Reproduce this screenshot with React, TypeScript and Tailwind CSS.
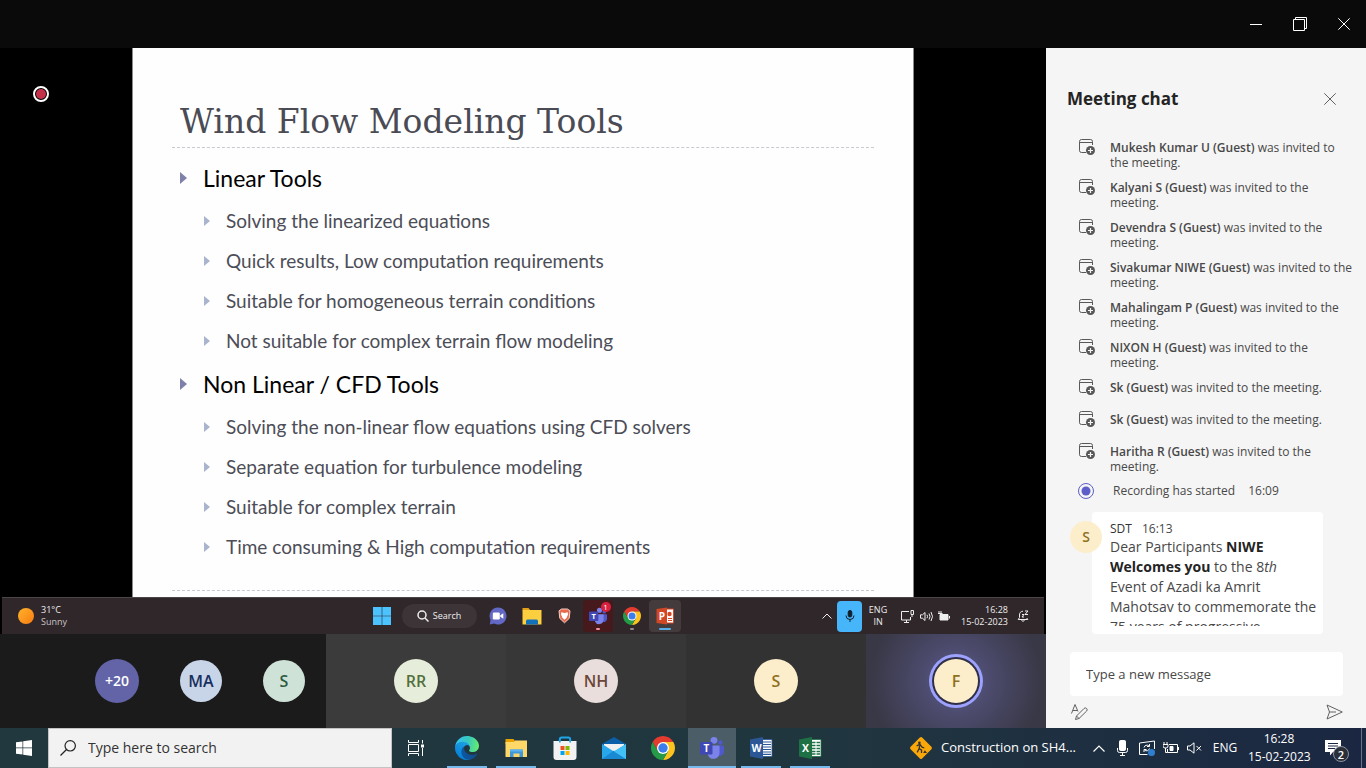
import type { ReactNode } from 'react'
import { clsx } from 'clsx'

const invites = [
  'Mukesh Kumar U (Guest)',
  'Kalyani S (Guest)',
  'Devendra S (Guest)',
  'Sivakumar NIWE (Guest)',
  'Mahalingam P (Guest)',
  'NIXON H (Guest)',
  'Sk (Guest)',
  'Sk (Guest)',
  'Haritha R (Guest)',
]

const slide = [
  {
    heading: 'Linear Tools',
    points: [
      'Solving the linearized equations',
      'Quick results, Low computation requirements',
      'Suitable for homogeneous terrain conditions',
      'Not suitable for complex terrain flow modeling',
    ],
  },
  {
    heading: 'Non Linear / CFD Tools',
    points: [
      'Solving the non-linear flow equations using CFD solvers',
      'Separate equation for turbulence modeling',
      'Suitable for complex terrain',
      'Time consuming & High computation requirements',
    ],
  },
]

/* ---------- Icons ---------- */

function CloseIcon() {
  return (
    <svg className="size-3" viewBox="0 0 12 12" fill="none" stroke="currentColor" strokeWidth="1">
      <path d="M.3.3l11.4 11.4M11.7.3L.3 11.7" />
    </svg>
  )
}

function InviteIcon() {
  return (
    <svg className="size-4 shrink-0 text-[#585858]" viewBox="0 0 16 16" fill="none">
      <path d="M7 13.5H2.5a2 2 0 01-2-2v-9a2 2 0 012-2h9a2 2 0 012 2V6M.5 3.5h13" stroke="currentColor" />
      <circle cx="11.5" cy="11.5" r="4.5" fill="currentColor" />
      <path d="M11.5 9v5M9 11.5h5" stroke="#f5f5f5" strokeWidth="1.2" />
    </svg>
  )
}

function ChromeIcon({ className }: { className: string }) {
  return (
    <svg className={className} viewBox="0 0 24 24">
      <path d="M22.39 6H12L6.8 15 1.61 6A12 12 0 0122.39 6z" fill="#e33b2e" />
      <path d="M22.39 6H12l5.2 9L12 24A12 12 0 0022.39 6z" fill="#fcc31e" />
      <path d="M12 24l5.2-9H6.8L1.61 6A12 12 0 0012 24z" fill="#259b48" />
      <circle cx="12" cy="12" r="6" fill="#fff" />
      <circle cx="12" cy="12" r="4.7" fill="#3b7ded" />
    </svg>
  )
}

function EdgeIcon() {
  return (
    <svg className="size-6" viewBox="0 0 256 256">
      <defs>
        <linearGradient id="edgeA" x1="60" y1="180" x2="240" y2="180" gradientUnits="userSpaceOnUse">
          <stop stopColor="#0c59a4" />
          <stop offset="1" stopColor="#114a8b" />
        </linearGradient>
        <linearGradient id="edgeB" x1="130" y1="90" x2="50" y2="220" gradientUnits="userSpaceOnUse">
          <stop stopColor="#1b9de2" />
          <stop offset="1" stopColor="#0883d9" />
        </linearGradient>
        <linearGradient id="edgeC" x1="10" y1="60" x2="250" y2="110" gradientUnits="userSpaceOnUse">
          <stop stopColor="#35c1f1" />
          <stop offset=".5" stopColor="#36c8c0" />
          <stop offset="1" stopColor="#66eb6e" />
        </linearGradient>
      </defs>
      <path
        fill="url(#edgeA)"
        d="M231 190.5c-3.4 1.8-6.9 3.3-10.5 4.7a101.9 101.9 0 01-35.9 6.46c-47.3 0-88.5-32.54-88.5-74.3a31.48 31.48 0 0116.4-27.3c-42.8 1.8-53.8 46.4-53.8 72.5 0 73.88 68.1 81.37 82.8 81.37 7.9 0 19.8-2.3 27-4.56l1.3-.44a128.34 128.34 0 0066.6-52.8 4 4 0 00-5.4-5.6z"
      />
      <path
        fill="url(#edgeB)"
        d="M105.73 241.42a79.2 79.2 0 01-22.74-21.34 80.72 80.72 0 0129.53-120c3.12-1.47 8.45-4.13 15.54-4a32.35 32.35 0 0125.69 13 31.88 31.88 0 016.36 18.66c0-.21 24.46-79.6-80-79.6-43.9 0-80 41.66-80 78.21a130.15 130.15 0 0012.11 56 128 128 0 00156.38 67.11 75.55 75.55 0 01-62.78-8z"
      />
      <path
        fill="url(#edgeC)"
        d="M152.33 148.86c-.81 1.05-3.3 2.5-3.3 5.66 0 2.61 1.7 5.12 4.72 7.23 14.38 10 41.49 8.68 41.56 8.68a59.56 59.56 0 0030.27-8.35A61.38 61.38 0 00256 109.24c.26-22.41-8-37.31-11.34-43.91C223.46 23.84 177.72 0 128 0A128 128 0 000 126.2c.48-36.54 36.8-66.05 80-66.05 3.5 0 23.46.34 42 10.07 16.34 8.58 24.9 18.94 30.85 29.21 6.18 10.67 7.28 24.15 7.28 29.52s-2.76 13.32-7.8 19.91z"
      />
    </svg>
  )
}

function ExplorerIcon() {
  return (
    <svg className="size-6" viewBox="0 0 24 24">
      <path d="M1.500 3h8l1.500 2v3h-9.500z" fill="#e8a200" />
      <path d="M1.500 6h8.500l1-1.500h12v16.500h-21.500z" fill="#ffd868" />
      <path d="M6 21v-7.500h13v7.500h-3.500v-3.500h-6V21z" fill="#3f97dc" />
      <path d="M6 13.500h13v2H6z" fill="#5db4ee" />
    </svg>
  )
}

function StoreIcon() {
  return (
    <svg className="size-6" viewBox="0 0 24 24">
      <path d="M6.800 6V3.500a2 2 0 012-2h6.400a2 2 0 012 2V6" fill="none" stroke="#1fa5e8" strokeWidth="2" />
      <path d="M.5 5h23v16a3 3 0 01-3 3h-17a3 3 0 01-3-3z" fill="#f2f2f2" />
      <path d="M7.500 10h4v4h-4z" fill="#f25022" />
      <path d="M12.500 10h4v4h-4z" fill="#7fba00" />
      <path d="M7.500 15h4v4h-4z" fill="#00a4ef" />
      <path d="M12.500 15h4v4h-4z" fill="#ffb900" />
      <path d="M6 5h1.700v1.500H6zM16.300 5H18v1.500h-1.700z" fill="#1fa5e8" />
    </svg>
  )
}

function MailIcon() {
  return (
    <svg className="size-6" viewBox="0 0 24 24">
      <path d="M0 8l12-7 12 7v3H0z" fill="#0a5fa8" />
      <path d="M2 8h20v7H2z" fill="#f1f1f1" />
      <path d="M0 8l12 7.500L24 8v15H0z" fill="#28a8ea" />
      <path d="M0 23l12-8.500 12 8.500z" fill="#1989d4" />
      <path d="M24 8v15L12 15.500z" fill="#42c1f7" />
    </svg>
  )
}

function TeamsIcon({ className }: { className: string }) {
  return (
    <svg className={className} viewBox="0 0 24 24">
      <circle cx="20.300" cy="6.500" r="2.300" fill="#5059c9" />
      <circle cx="14" cy="4.300" r="3.400" fill="#7b83eb" />
      <path d="M17 9.500h6a1 1 0 011 1V16a4 4 0 01-6.500 3z" fill="#5059c9" />
      <path d="M8 9.500h10.500a1 1 0 011 1V17a6 6 0 01-11.500 2.200z" fill="#7b83eb" />
      <rect x="0" y="6" width="12.500" height="12.500" rx="1.200" fill="#4048b5" />
      <text x="6.300" y="15.800" textAnchor="middle" fontSize="10" fontWeight="700" fill="#fff">T</text>
    </svg>
  )
}

function OfficeIcon({ letter, color, sheet }: { letter: string; color: string; sheet?: boolean }) {
  return (
    <svg className="size-6" viewBox="0 0 24 24">
      <path d="M12 3.500h11v17H12z" fill="#fff" stroke={color} strokeWidth=".8" />
      {sheet ? (
        <path
          d="M14 6.500h3.500M18.500 6.500H22M14 9.500h3.500M18.500 9.500H22M14 12.500h3.500M18.500 12.500H22M14 15.500h3.500M18.500 15.500H22M14 18h3.500M18.500 18H22"
          stroke={color}
          strokeWidth="1.600"
        />
      ) : (
        <path d="M14 6h8M14 8.500h8M14 11h8M14 13.500h8M14 16h8M14 18.300h8" stroke={color} strokeWidth="1.200" />
      )}
      <path d="M1 3.500l13-2.500v22L1 20.500z" fill={color} />
      <text x="7.500" y="16" textAnchor="middle" fontSize="10.500" fontWeight="700" fill="#fff">{letter}</text>
    </svg>
  )
}

/* ---------- Shared screen ---------- */

function Slide() {
  return (
    <article className="mx-auto w-full max-w-[782px] flex-1 border-x border-[#8a8a8a] bg-[#fefefe] px-[39px] pt-12">
      <h1 className="border-b border-dashed border-[#c9c9d0] pl-2 font-['DejaVu_Serif',serif] text-[33px] leading-[51px] whitespace-nowrap text-[#4a4b55]">
        Wind Flow Modeling Tools
      </h1>
      <ul className="border-b border-dashed border-[#c9c9d0] pt-[7px] pb-[23px] pl-2 font-['Lato',sans-serif]">
        {slide.map((group) => (
          <li key={group.heading}>
            <div className="flex items-center gap-4 text-[23px] leading-[46px] text-black">
              <Arrow className="h-3 w-[7px] text-[#7f82a8]" />
              {group.heading}
            </div>
            <ul className="pl-6">
              {group.points.map((point) => (
                <li key={point} className="flex items-center gap-4 text-[19px] leading-10 whitespace-nowrap text-[#4c4d57]">
                  <Arrow className="h-[10px] w-[6px] text-[#a9b5cd]" />
                  {point}
                </li>
              ))}
            </ul>
          </li>
        ))}
      </ul>
    </article>
  )
}

function Arrow({ className }: { className: string }) {
  return (
    <svg className={clsx('shrink-0', className)} viewBox="0 0 7 12" preserveAspectRatio="none">
      <path d="M0 0l7 6-7 6z" fill="currentColor" />
    </svg>
  )
}

function SharedTaskbar() {
  return (
    <div className="mx-[2px] flex h-[37px] shrink-0 items-center justify-between border-t border-[#4c4546] bg-[#30272a] font-['Open_Sans',sans-serif] text-[9px] leading-3 text-[#eee]">
      <div className="flex flex-1 items-center gap-[7px]">
        <span className="ml-4 size-4 rounded-full bg-linear-to-br from-[#ffb32b] to-[#f77b10]" />
        <p>
          31°C
          <br />
          <span className="text-[#c9c4c5]">Sunny</span>
        </p>
      </div>

      <div className="flex items-center">
        <button aria-label="Windows" className="flex w-8 justify-center">
          <svg className="size-[18px]" viewBox="0 0 18 18" fill="#4cc2ff">
            <path d="M0 0h8.700v8.700H0zM9.300 0H18v8.700H9.300zM0 9.300h8.700V18H0zM9.300 9.300H18V18H9.300z" />
          </svg>
        </button>
        <button className="mx-1 flex h-6 w-[75px] items-center justify-center gap-1 rounded-full bg-[#3c3436]">
          <svg className="size-3" viewBox="0 0 12 12" fill="none" stroke="currentColor" strokeWidth="1.500">
            <circle cx="5" cy="5" r="4" />
            <path d="M8 8l3.500 3.500" />
          </svg>
          Search
        </button>
        <button aria-label="Chat" className="flex w-[34px] justify-center">
          <svg className="size-[18px]" viewBox="0 0 18 18">
            <path d="M9 .5a8.500 8.500 0 11-3.800 16.100L.8 17.500l.7-4.600A8.500 8.500 0 019 .5z" fill="#6268c4" />
            <rect x="3.800" y="5.500" width="7" height="7" rx="1.200" fill="#fff" />
            <path d="M11.300 8.300l3-2v5.500l-3-2z" fill="#fff" />
          </svg>
        </button>
        <button aria-label="Files" className="flex w-[34px] justify-center">
          <svg className="h-[17px] w-5" viewBox="0 0 20 17">
            <path d="M.5 0h6l2 2.500H.5z" fill="#e5a01a" />
            <path d="M.5 2h19v14.500H.5z" fill="#fccf3e" />
            <path d="M4 16.500v-3.500a1.500 1.500 0 011.500-1.500h9a1.500 1.500 0 011.500 1.500v3.500z" fill="#1371b9" />
          </svg>
        </button>
        <button aria-label="Brave" className="flex w-8 justify-center">
          <svg className="h-4 w-[13px]" viewBox="0 0 13 16">
            <path d="M3.500 1h6l2.500 1.800-.8 7.600-4.700 4.400-4.700-4.400L1 2.800z" fill="#e76a4f" stroke="#f6cfc5" />
            <path d="M3.300 4.200l3.200.8 3.200-.8.3 2.300L8.500 10l-2 1.800-2-1.800L3 6.500z" fill="#fff" />
          </svg>
        </button>
        <button aria-label="Teams" className="relative flex h-8 w-[34px] items-center justify-center">
          <span className="absolute inset-x-[2px] inset-y-0 rounded bg-[#46191c]" />
          <TeamsIcon className="relative size-[18px]" />
          <span className="absolute top-[2px] right-[4px] flex size-[10px] items-center justify-center rounded-full bg-[#d9203f] text-[8px] leading-none text-white">
            1
          </span>
          <span className="absolute bottom-[2px] h-[2px] w-1 rounded-full bg-[#f2929b]" />
        </button>
        <button aria-label="Chrome" className="relative flex h-8 w-[34px] items-center justify-center">
          <ChromeIcon className="size-[18px]" />
          <span className="absolute bottom-[2px] h-[2px] w-1 rounded-full bg-[#928c8d]" />
        </button>
        <button aria-label="PowerPoint" className="relative flex h-8 w-8 items-center justify-center rounded bg-[#433b3c]">
          <svg className="size-[18px]" viewBox="0 0 18 18">
            <path d="M10 2h7.500v14H10z" fill="#fff" stroke="#d24726" />
            <circle cx="13.500" cy="7" r="2.200" fill="#d24726" />
            <path d="M12 11.500h4M12 13.500h4" stroke="#d24726" />
            <path d="M.5 2L11 .5v17L.5 16z" fill="#d24726" />
            <text x="5.800" y="12.700" textAnchor="middle" fontSize="10" fontWeight="700" fill="#fff">P</text>
          </svg>
          <span className="absolute bottom-[2px] h-[2px] w-3 rounded-full bg-[#58aee8]" />
        </button>
      </div>

      <div className="flex flex-1 items-center justify-end">
        <svg className="mr-[5px] h-[6px] w-[10px]" viewBox="0 0 10 6" fill="none" stroke="currentColor">
          <path d="M.5 5.500L5 1l4.500 4.500" />
        </svg>
        <span className="flex h-[31px] w-[25px] items-center justify-center rounded bg-[#47b5f9]">
          <svg className="h-3 w-[10px]" viewBox="0 0 10 12" fill="none" stroke="#10202c">
            <rect x="3.200" y=".5" width="3.600" height="6.500" rx="1.800" fill="#10202c" />
            <path d="M1 5.500a4 4 0 008 0M5 9.500V12" />
          </svg>
        </span>
        <p className="w-8 text-center">
          ENG
          <br />
          IN
        </p>
        <svg className="ml-[7px] size-[13px]" viewBox="0 0 13 13" fill="none" stroke="currentColor">
          <path d="M8 1.500H.5v8.500h9V7M3 12.500h5M5.500 10v2.500M10 .5h2.500v4H10zM11 4.500V7" />
        </svg>
        <svg className="ml-[6px] h-[11px] w-[13px]" viewBox="0 0 13 11" fill="none" stroke="currentColor">
          <path d="M.5 3.800h2L5 1.500v8L2.500 7.200h-2zM7 3.800q1 1.700 0 3.400M9 2.500q2 3 0 6M11 1q3 4.500 0 9" />
        </svg>
        <svg className="ml-[5px] h-[10px] w-3" viewBox="0 0 12 10" fill="none" stroke="currentColor">
          <path d="M2 3.500h8v5.500H2z" fill="currentColor" />
          <path d="M11.500 5v2.500M1 0v2M3 0v2M0 2.500h4.500" />
        </svg>
        <p className="ml-[11px] text-right whitespace-nowrap">
          16:28
          <br />
          15-02-2023
        </p>
        <svg className="mr-[15px] ml-[9px] size-3" viewBox="0 0 12 12" fill="none" stroke="currentColor">
          <path d="M6 1.200A3.500 3.500 0 002.500 5v2.500L1.200 9.500h9.600L9.700 8M4.500 10.500q1.500 1.500 3 0M8 1h3L8 4.500h3M5 4.500h2L5 7h2" />
        </svg>
      </div>
    </div>
  )
}

/* ---------- Participants ---------- */

function Avatar({ className, children }: { className: string; children: ReactNode }) {
  return (
    <span className={clsx('flex shrink-0 items-center justify-center rounded-full font-semibold', className)}>
      {children}
    </span>
  )
}

function Participants() {
  return (
    <div className="flex h-[94px] shrink-0 bg-[#1b1b1b] text-base">
      <div className="flex flex-1 items-center justify-end gap-[41px] pr-[21px]">
        <Avatar className="size-11 bg-[#6264a7] text-sm text-white">+20</Avatar>
        <Avatar className="size-[42px] bg-[#c8d4e8] text-[#17305f]">MA</Avatar>
        <Avatar className="size-[42px] bg-[#cfe2d7] text-[#2b5a41]">S</Avatar>
      </div>
      <div className="flex w-45 items-center justify-center bg-[#3b3b3b]">
        <Avatar className="size-11 bg-[#e6eedb] text-[#52703c]">RR</Avatar>
      </div>
      <div className="flex w-45 items-center justify-center bg-[#373737]">
        <Avatar className="size-11 bg-[#e9dedb] text-[#6b4639]">NH</Avatar>
      </div>
      <div className="flex w-45 items-center justify-center bg-[#323232]">
        <Avatar className="size-11 bg-[#fdeecb] text-[#8f701e]">S</Avatar>
      </div>
      <div className="flex w-45 items-center justify-center bg-[radial-gradient(circle,#5a5a8e_0%,#4a4969_38%,#393846_85%)]">
        <Avatar className="size-11 bg-[#fdeecb] text-[#8f701e] shadow-[0_0_0_2px_#2f2f48,0_0_0_5px_#9ea2ff]">F</Avatar>
      </div>
    </div>
  )
}

/* ---------- Chat ---------- */

function MeetingChat() {
  return (
    <aside className="flex w-80 shrink-0 flex-col bg-[#f5f5f5] text-[#484848]">
      <header className="flex items-center justify-between pt-[38px] pr-[30px] pb-7 pl-[21px]">
        <h2 className="text-[17px] leading-[25px] font-bold text-[#242424]">Meeting chat</h2>
        <button aria-label="Close chat" className="text-[#616161]">
          <CloseIcon />
        </button>
      </header>

      <div className="min-h-0 flex-1 overflow-hidden">
        <ul className="flex flex-col gap-[9px] pr-[13px] pl-[33px] text-xs leading-[15px]">
          {invites.map((name, i) => (
            <li key={i} className="flex min-h-[23px] gap-[15px]">
              <InviteIcon />
              <p className="pt-px">
                <span className="font-semibold">{name}</span> was invited to the meeting.
              </p>
            </li>
          ))}
        </ul>

        <div className="flex items-center pt-2 pl-8 text-xs leading-[17px]">
          <svg className="size-4 text-[#5b5fc7]" viewBox="0 0 16 16">
            <circle cx="8" cy="8" r="7.500" fill="none" stroke="currentColor" />
            <circle cx="8" cy="8" r="4.500" fill="currentColor" />
          </svg>
          <p className="ml-[19px]">Recording has started</p>
          <time className="ml-[13px]">16:09</time>
        </div>

        <div className="flex items-start pt-[13px] pr-[43px] pl-6">
          <Avatar className="relative mt-[9px] -mr-[10px] size-8 bg-[#fdeecb] text-sm text-[#8f701e]">S</Avatar>
          <article className="min-w-0 flex-1 rounded bg-white py-2 pr-1 pl-[18px]">
            <p className="text-xs leading-[17px]">
              <span className="text-[#333]">SDT</span>
              <time className="ml-[10px]">16:13</time>
            </p>
            <p className="h-[89px] overflow-hidden text-sm leading-5">
              Dear Participants <b className="text-[#242424]">NIWE Welcomes you</b> to the 8<i>th</i>
              <br />
              Event of Azadi ka Amrit
              <br />
              Mahotsav to commemorate the
              <br />
              75 years of progressive
            </p>
          </article>
        </div>
      </div>

      <form className="pt-[18px] pr-[23px] pl-6">
        <input
          aria-label="Type a new message"
          placeholder="Type a new message"
          className="h-11 w-full rounded-sm bg-white px-4 text-[13px] placeholder:text-[#484848]"
        />
        <div className="flex h-8 items-center justify-between">
          <button type="button" aria-label="Format">
            <svg className="size-[18px]" viewBox="0 0 18 18" fill="none" stroke="#616161">
              <path d="M1.500 10.500L5 1.500l3 7M2.800 7.500H7" />
              <path d="M5.500 16.500l1-3.500 7.500-7.500a1.800 1.800 0 012.600 2.600L9 15.500zM6.500 13L9 15.500" />
            </svg>
          </button>
          <button type="button" aria-label="Send">
            <svg className="h-4 w-[17px]" viewBox="0 0 17 16" fill="none" stroke="#616161">
              <path d="M1 1l15.300 7L1 15l2.500-7zM3.500 8H10" strokeLinejoin="round" />
            </svg>
          </button>
        </div>
      </form>
    </aside>
  )
}

/* ---------- Windows taskbar ---------- */

function TaskButton({ label, open, active, children }: { label: string; open?: boolean; active?: boolean; children: ReactNode }) {
  return (
    <button
      aria-label={label}
      className={clsx('relative flex h-10 w-12 items-center justify-center', active && 'bg-[#4b5d67]')}
    >
      {children}
      {open && <span className={clsx('absolute bottom-0 h-[2px] bg-[#76b9ed]', active ? 'inset-x-0' : 'inset-x-1')} />}
    </button>
  )
}

function Taskbar() {
  return (
    <footer className="flex h-10 shrink-0 items-center bg-linear-to-r from-[#22383f] via-[#20363f] via-60% to-[#1b2742] text-white">
      <button aria-label="Start" className="flex w-12 justify-center">
        <svg className="size-4" viewBox="0 0 16 16" fill="#fff">
          <path d="M0 2.300L6.500 1.400v6.200H0zM7.200 1.300L16 0v7.600H7.200zM0 8.300h6.500v6.200L0 13.700zM7.200 8.300H16V16l-8.800-1.300z" />
        </svg>
      </button>
      <label className="flex h-10 w-[344px] items-center gap-3 border border-[#c3c3c3] bg-[#f2f2f2] pl-[11px] text-[#333]">
        <svg className="size-4 shrink-0" viewBox="0 0 16 16" fill="none" stroke="#222" strokeWidth="1.200">
          <circle cx="10.200" cy="5.800" r="5.200" />
          <path d="M6.500 9.500L.5 15.500" />
        </svg>
        <input
          aria-label="Type here to search"
          placeholder="Type here to search"
          className="min-w-0 flex-1 text-sm placeholder:text-[#333]"
        />
      </label>
      <TaskButton label="Task view">
        <svg className="size-4" viewBox="0 0 16 16" fill="none" stroke="#fff">
          <path d="M.5 0v2.500h10V0M.5 16v-2.500h10V16M.5 4.500h10v7H.5zM14.500 0v3.500M14.500 8v8" />
          <path d="M13 4.500h3v3h-3z" fill="#fff" stroke="none" />
        </svg>
      </TaskButton>
      <div className="ml-[3px] flex gap-px">
        <TaskButton label="Edge" open><EdgeIcon /></TaskButton>
        <TaskButton label="File Explorer" open><ExplorerIcon /></TaskButton>
        <TaskButton label="Store"><StoreIcon /></TaskButton>
        <TaskButton label="Mail"><MailIcon /></TaskButton>
        <TaskButton label="Chrome"><ChromeIcon className="size-6" /></TaskButton>
        <TaskButton label="Teams" open active><TeamsIcon className="size-6" /></TaskButton>
        <TaskButton label="Word" open><OfficeIcon letter="W" color="#2b5797" /></TaskButton>
        <TaskButton label="Excel" open><OfficeIcon letter="X" color="#1e7145" sheet /></TaskButton>
      </div>

      <div className="ml-auto flex h-10 items-center">
        <button className="flex items-center gap-2 text-[13px] whitespace-nowrap">
          <svg className="size-6" viewBox="0 0 22 22">
            <rect x="3.500" y="3.500" width="15" height="15" rx="1.500" transform="rotate(45 11 11)" fill="#faa70a" />
            <circle cx="9.500" cy="6.300" r="1.200" fill="#333" />
            <path d="M7 9l3-1.300 2 2.500 2 .8M9.800 8.500l-.5 3 2.200 1.500V15.500M9.300 11.500L7.500 15" stroke="#333" strokeWidth="1.200" fill="none" />
            <path d="M13 15.500l1.500-2.500 2 2.500z" fill="#333" />
          </svg>
          Construction on SH4...
        </button>
        <svg className="ml-[17px] h-[7px] w-3" viewBox="0 0 12 7" fill="none" stroke="#fff" strokeWidth="1.200">
          <path d="M.5 6.500L6 1l5.500 5.500" />
        </svg>
        <svg className="ml-3 h-4 w-[11px]" viewBox="0 0 11 16" fill="none" stroke="#fff">
          <rect x="2.500" y=".5" width="6" height="10" rx="1" fill="#fff" />
          <path d="M.5 8v2.500a2 2 0 002 2h6a2 2 0 002-2V8M5.500 12.500v3M3 15.500h5" />
        </svg>
        <svg className="ml-[11px] size-4" viewBox="0 0 16 16" fill="none" stroke="#fff">
          <path d="M8.500 14.500H.5V3l15-2v8" />
          <path d="M5 7.500a3 3 0 015-1.500M10.500 4v2.500H8M10.500 8.500a3 3 0 01-5 1.500M5 12V9.500h2.500" />
          <circle cx="12.500" cy="12.500" r="3.500" fill="#2f7fd0" stroke="none" />
        </svg>
        <svg className="ml-2 h-3 w-4" viewBox="0 0 16 12" fill="none" stroke="#fff">
          <path d="M6 2.500h8.500v8H4.500V7M15.500 5v3M1 0v2M4 0v2M0 2.500h5v1.500a2 2 0 01-2 2h-1a2 2 0 01-2-2zM2.500 6v4.500h2" />
          <path d="M7 4.500h3v4H7z" fill="#fff" />
        </svg>
        <svg className="ml-2 h-3 w-[15px]" viewBox="0 0 15 12" fill="none" stroke="#fff">
          <path d="M.5 4h2.500L7 .8v10.400L3 8H.5zM9.500 4l4.500 4.500M14 4L9.500 8.500" />
        </svg>
        <span className="w-[46px] text-center text-xs">ENG</span>
        <p className="w-[62px] text-center text-xs leading-[18px] whitespace-nowrap">
          16:28
          <br />
          15-02-2023
        </p>
        <button aria-label="Notifications" className="relative flex w-[51px] justify-center pr-[5px]">
          <svg className="size-4" viewBox="0 0 16 16">
            <path d="M0 0h16v12H8l-3 3.500V12H0z" fill="#fff" />
            <path d="M3 3.500h10M3 6h10M3 8.500h7" stroke="#1b2742" />
          </svg>
          <span className="absolute top-[6px] right-3 flex size-4 items-center justify-center rounded-full border border-[#8d949e] bg-[#2b3038] text-[11px] leading-none font-semibold">
            2
          </span>
        </button>
        <span className="h-10 w-[5px] border-l border-[#6a7386]" />
      </div>
    </footer>
  )
}

export default function App() {
  return (
    <div className="flex h-screen flex-col overflow-hidden bg-black font-['Open_Sans','Noto_Sans',sans-serif]">
      <header className="flex h-12 shrink-0 justify-end bg-[#0a0a0a] text-white">
        <button aria-label="Minimize" className="flex w-11 items-center justify-center">
          <svg className="h-px w-3" viewBox="0 0 12 1" fill="currentColor">
            <path d="M0 0h12v1H0z" />
          </svg>
        </button>
        <button aria-label="Restore" className="flex w-11 items-center justify-center">
          <svg className="size-[14px]" viewBox="0 0 14 14" fill="none" stroke="currentColor">
            <path d="M.5 2.500h11v11H.5zM2.500 2.500v-2h11v11h-2" />
          </svg>
        </button>
        <button aria-label="Close" className="flex w-11 items-center justify-center">
          <CloseIcon />
        </button>
      </header>

      <div className="flex min-h-0 flex-1">
        <main className="flex min-w-0 flex-1 flex-col">
          <section className="relative flex min-h-0 flex-1 flex-col">
            <Slide />
            <SharedTaskbar />
            <span className="absolute top-[38px] left-[33px] flex size-4 items-center justify-center rounded-full border-2 border-white">
              <span className="size-[10px] rounded-full bg-[#c4314b]" />
            </span>
          </section>
          <Participants />
        </main>
        <MeetingChat />
      </div>

      <Taskbar />
    </div>
  )
}
